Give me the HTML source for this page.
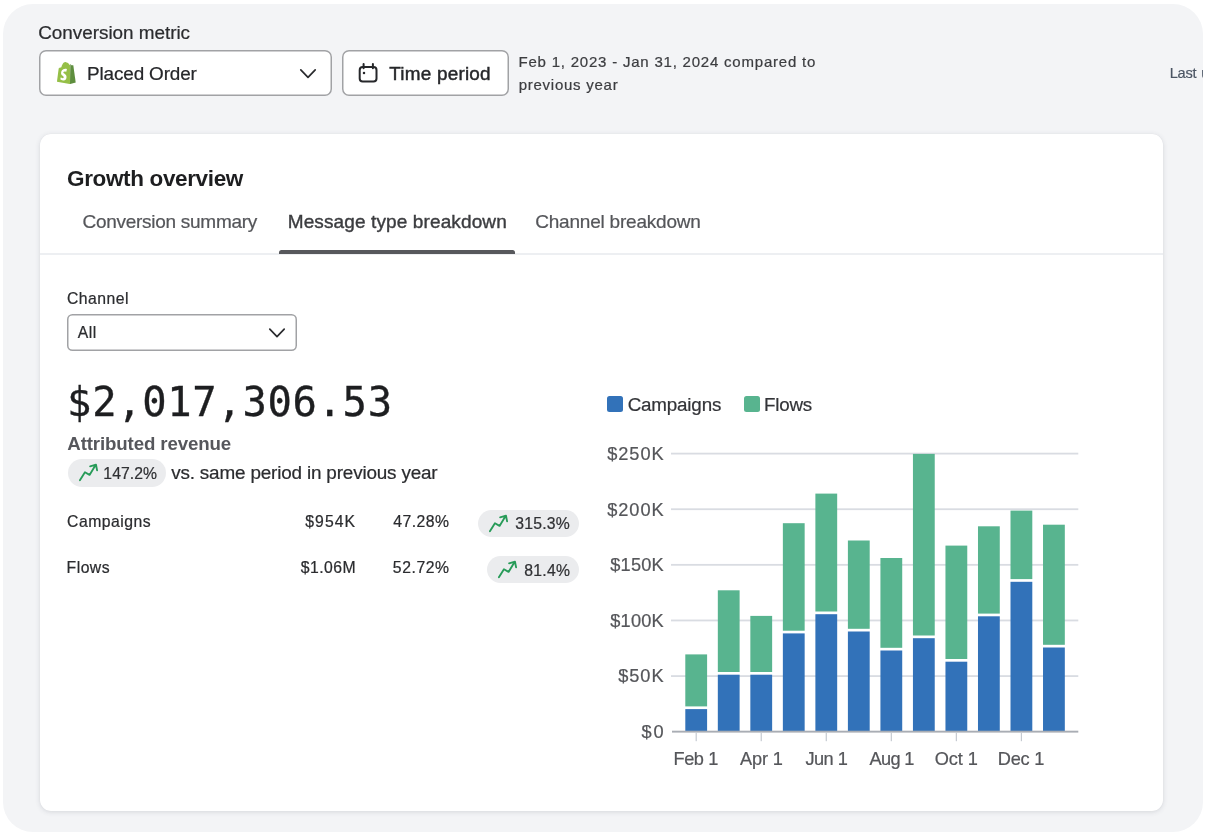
<!DOCTYPE html>
<html lang="en">
<head>
<meta charset="utf-8">
<title>Growth overview</title>
<style>
*{box-sizing:border-box;margin:0;padding:0}
html,body{width:1205px;height:836px;overflow:hidden;background:#fff}
body{position:relative;font-family:"Liberation Sans",sans-serif;color:#202124;-webkit-font-smoothing:antialiased}
.abs{position:absolute}
.t{position:absolute;white-space:nowrap;line-height:1;-webkit-text-stroke:.22px currentColor}
#panel{position:absolute;left:3px;top:4px;width:1200px;height:828px;background:#f3f4f6;border-radius:30px;overflow:hidden}
#card{position:absolute;left:39.5px;top:134px;width:1123.7px;height:676.8px;background:#fff;border-radius:11px;box-shadow:0 1px 5px rgba(60,70,85,.16),0 0 1px rgba(60,70,85,.10)}
.box{position:absolute;background:#fff;border-radius:7px;box-shadow:inset 0 0 0 1.5px #a1a2a5}
.pill{position:absolute;background:#ebecee;border-radius:14px;height:27.6px}
</style>
</head>
<body>
<div id="panel"></div>
<div id="layer" style="position:absolute;left:0;top:0;width:1205px;height:836px;will-change:transform">

<!-- header controls -->
<div class="t" id="lblConv" style="left:38.26px;top:23.80px;font-size:18.9px;letter-spacing:-0.026px;color:#2b2c2f">Conversion metric</div>

<div class="box" id="sel1" style="left:39.3px;top:50.4px;width:293px;height:45.4px"></div>
<svg class="abs" id="bag" style="left:56.8px;top:61.9px" width="18.8" height="22.1" preserveAspectRatio="none" viewBox="0 0 109.5 124.5">
  <path d="M74.7 14.8s-1.4.4-3.7 1.1c-.4-1.3-1-2.8-1.8-4.4-2.6-5-6.500-7.700-11.100-7.700-.3 0-.6 0-1 .1-.1-.2-.3-.3-.4-.5-2-2.200-4.600-3.200-7.700-3.100-6 .2-12 4.500-16.800 12.200-3.400 5.400-6 12.200-6.700 17.500-6.900 2.100-11.700 3.600-11.800 3.700-3.500 1.100-3.600 1.200-4 4.500C9.100 40.700 0 111.200 0 111.200l75.600 13.100V14.600c-.4.100-.7.100-.9.200z" fill="#95bf47"/>
  <path d="M75.600 124.300l33.900-8.400S95.400 20.600 95.300 20c-.1-.6-.6-1-1.100-1-.5 0-9.300-.2-9.300-.2s-5.400-5.200-7.400-7.200l-1.900 112.700z" fill="#5e8e3e"/>
  <path d="M58 39.900l-3.900 14.700s-4.400-2-9.600-1.700c-7.600.5-7.700 5.300-7.600 6.500.4 6.600 17.700 8 18.700 23.400.8 12.100-6.400 20.400-16.800 21.100-12.500.8-19.400-6.600-19.400-6.600l2.600-11.300s6.900 5.200 12.400 4.900c3.600-.2 4.900-3.200 4.800-5.300-.5-8.600-14.700-8.100-15.600-22.300-.8-11.900 7.100-24 24.400-25.100 6.800-.5 10 1.700 10 1.700z" fill="#fff"/>
</svg>
<div class="t" id="txtPlaced" style="left:87.04px;top:64.80px;font-size:18.9px;letter-spacing:-0.132px;color:#26272a">Placed Order</div>
<svg class="abs" id="chev1" style="left:298.40px;top:67.20px" width="20" height="14" viewBox="0 0 20 14"><path d="M2.800 2.800 L10 10.400 L17.200 2.800" fill="none" stroke="#2a2b2e" stroke-width="1.700" stroke-linecap="round" stroke-linejoin="round"/></svg>

<div class="box" id="btnTime" style="left:342px;top:50.400px;width:166.800px;height:45.400px"></div>
<svg class="abs" id="cal" style="left:356px;top:61px" width="24" height="24" viewBox="0 0 24 24" fill="none" stroke="#26272a" stroke-width="2" stroke-linecap="round">
  <rect x="3.700" y="5.900" width="16.800" height="14.600" rx="3"/>
  <path d="M7.600 2.900v4.400M16.900 2.900v4.400"/>
  <circle cx="8" cy="12" r="1.250" fill="#26272a" stroke="none"/>
</svg>
<div class="t" id="txtTime" style="left:389.29px;top:64.50px;font-size:18.9px;letter-spacing:0.225px;color:#26272a;-webkit-text-stroke:.45px #26272a">Time period</div>

<div class="t" id="txtDate1" style="left:518.54px;top:53.90px;font-size:15px;color:#3c3d40;letter-spacing:0.787px">Feb 1, 2023 - Jan 31, 2024 compared to</div>
<div class="t" id="txtDate2" style="left:518.66px;top:77.20px;font-size:15px;color:#3c3d40;letter-spacing:0.750px">previous year</div>
<div class="t" id="txtLast" style="left:1169.8px;top:65.64px;font-size:14.6px;color:#4b5563;width:33.2px;overflow:hidden;letter-spacing:-.3px;word-spacing:1.3px;-webkit-text-stroke:.2px #4b5563">Last updated</div>

<div id="card"></div>

<!-- card header -->
<div class="t" id="ttl" style="left:67.00px;top:168.27px;font-size:22.5px;font-weight:700;color:#1d1e20;letter-spacing:-0.355px;-webkit-text-stroke:0">Growth overview</div>
<div class="t" id="tab1" style="left:82.55px;top:212.41px;font-size:19px;color:#55565a;letter-spacing:-0.280px">Conversion summary</div>
<div class="t" id="tab2" style="left:287.71px;top:212.41px;font-size:19px;color:#3c3d40;letter-spacing:0.122px;-webkit-text-stroke:.4px #3c3d40">Message type breakdown</div>
<div class="t" id="tab3" style="left:535.21px;top:212.41px;font-size:19px;color:#55565a;letter-spacing:-0.205px">Channel breakdown</div>
<div class="abs" id="divider" style="left:39.5px;top:253px;width:1123.7px;height:1.8px;background:#edeff2"></div>
<div class="abs" id="tabline" style="left:278.9px;top:250px;width:236.3px;height:3.5px;background:#57585c;border-radius:2.5px 2.5px 0 0"></div>

<!-- channel select -->
<div class="t" id="lblChan" style="left:66.94px;top:291.36px;font-size:15.75px;color:#2b2c2f;letter-spacing:0.463px">Channel</div>
<div class="box" id="sel2" style="left:67.3px;top:314.3px;width:229.8px;height:36.8px;border-radius:5.5px"></div>
<div class="t" id="txtAll" style="left:77.69px;top:324.86px;font-size:15.75px;color:#2b2c2f;letter-spacing:0.524px">All</div>
<svg class="abs" id="chev2" style="left:267.400px;top:326.400px" width="20" height="14" viewBox="0 0 20 14"><path d="M2.800 3.200 L10 10.600 L17.200 3.200" fill="none" stroke="#2a2b2e" stroke-width="1.700" stroke-linecap="round" stroke-linejoin="round"/></svg>

<!-- big number -->
<div class="t" id="big" style="left:67.08px;top:381.83px;font-family:'DejaVu Sans Mono','Liberation Mono',monospace;font-size:40.5px;color:#1d1e20;letter-spacing:0.664px;-webkit-text-stroke:.35px #1d1e20">$2,017,306.53</div>
<div class="t" id="attr" style="left:67.34px;top:435.07px;font-size:18.7px;font-weight:700;color:#56575c;letter-spacing:-0.139px;-webkit-text-stroke:0">Attributed revenue</div>

<div class="pill" id="pill0" style="left:67.500px;top:459px;width:98.600px"></div>
<svg class="abs trend" id="tr0" style="left:67.50px;top:459.00px" width="40" height="28" viewBox="0 0 40 28"><path d="M11.9 21.3 L16.95 13.2 L21.55 15.9 L27.6 5.9 M22.1 7.3 L28 5.7 L29.1 11.4" fill="none" stroke="#279b58" stroke-width="1.85" stroke-linecap="round" stroke-linejoin="round"/></svg>
<div class="t" id="p0t" style="left:103.35px;top:465.56px;font-size:15.75px;color:#303134;letter-spacing:0.073px">147.2%</div>
<div class="t" id="vs" style="left:171.16px;top:464.40px;font-size:18.9px;color:#2b2c2f;letter-spacing:-0.176px">vs. same period in previous year</div>

<!-- rows -->
<div class="t" id="r1a" style="left:67.08px;top:513.76px;font-size:15.75px;color:#2b2c2f;letter-spacing:0.472px">Campaigns</div>
<div class="t" id="r1b" style="left:305.27px;top:513.76px;font-size:15.75px;color:#2b2c2f;letter-spacing:1.073px">$954K</div>
<div class="t" id="r1c" style="left:393.22px;top:513.76px;font-size:15.75px;color:#2b2c2f;letter-spacing:0.492px">47.28%</div>
<div class="pill" id="pill1" style="left:478.20px;top:509.70px;width:101.100px"></div>
<svg class="abs trend" id="tr1" style="left:478.20px;top:509.70px" width="40" height="28" viewBox="0 0 40 28"><path d="M11.9 21.3 L16.95 13.2 L21.55 15.9 L27.6 5.9 M22.1 7.3 L28 5.7 L29.1 11.4" fill="none" stroke="#279b58" stroke-width="1.85" stroke-linecap="round" stroke-linejoin="round"/></svg>
<div class="t" id="p1t" style="left:515.29px;top:515.76px;font-size:15.75px;color:#303134;letter-spacing:0.229px">315.3%</div>

<div class="t" id="r2a" style="left:66.62px;top:559.66px;font-size:15.75px;color:#2b2c2f;letter-spacing:0.452px">Flows</div>
<div class="t" id="r2b" style="left:300.84px;top:559.66px;font-size:15.75px;color:#2b2c2f;letter-spacing:0.462px">$1.06M</div>
<div class="t" id="r2c" style="left:392.84px;top:559.66px;font-size:15.75px;color:#2b2c2f;letter-spacing:0.570px">52.72%</div>
<div class="pill" id="pill2" style="left:487.20px;top:555.60px;width:92.300px"></div>
<svg class="abs trend" id="tr2" style="left:487.20px;top:555.60px" width="40" height="28" viewBox="0 0 40 28"><path d="M11.9 21.3 L16.95 13.2 L21.55 15.9 L27.6 5.9 M22.1 7.3 L28 5.7 L29.1 11.4" fill="none" stroke="#279b58" stroke-width="1.85" stroke-linecap="round" stroke-linejoin="round"/></svg>
<div class="t" id="p2t" style="left:524.29px;top:563.16px;font-size:15.75px;color:#303134;letter-spacing:0.251px">81.4%</div>

<!-- CHART -->
<svg id="chart" class="abs" style="left:0;top:0" width="1205" height="836" viewBox="0 0 1205 836" font-family="'Liberation Sans', sans-serif">
<rect x="671" y="675.18" width="407.3" height="1.8" fill="#d9dce2"/>
<rect x="671" y="619.56" width="407.3" height="1.8" fill="#d9dce2"/>
<rect x="671" y="563.94" width="407.3" height="1.8" fill="#d9dce2"/>
<rect x="671" y="508.32" width="407.3" height="1.8" fill="#d9dce2"/>
<rect x="671" y="452.70" width="407.3" height="1.8" fill="#d9dce2"/>
<rect x="607" y="396" width="16" height="16" rx="2.5" fill="#3272b9"/>
<rect x="744" y="396" width="16" height="16" rx="2.5" fill="#58b48f"/>
<rect x="685.30" y="654.40" width="21.8" height="52.00" fill="#58b48f"/>
<rect x="685.30" y="709.10" width="21.8" height="22.50" fill="#3272b9"/>
<rect x="717.82" y="590.30" width="21.8" height="81.70" fill="#58b48f"/>
<rect x="717.82" y="674.70" width="21.8" height="56.90" fill="#3272b9"/>
<rect x="750.34" y="615.90" width="21.8" height="56.10" fill="#58b48f"/>
<rect x="750.34" y="674.70" width="21.8" height="56.90" fill="#3272b9"/>
<rect x="782.86" y="523.20" width="21.8" height="107.50" fill="#58b48f"/>
<rect x="782.86" y="633.40" width="21.8" height="98.20" fill="#3272b9"/>
<rect x="815.38" y="493.60" width="21.8" height="117.90" fill="#58b48f"/>
<rect x="815.38" y="614.20" width="21.8" height="117.40" fill="#3272b9"/>
<rect x="847.90" y="540.50" width="21.8" height="88.30" fill="#58b48f"/>
<rect x="847.90" y="631.50" width="21.8" height="100.10" fill="#3272b9"/>
<rect x="880.42" y="558.00" width="21.8" height="89.80" fill="#58b48f"/>
<rect x="880.42" y="650.50" width="21.8" height="81.10" fill="#3272b9"/>
<rect x="912.94" y="453.90" width="21.8" height="181.60" fill="#58b48f"/>
<rect x="912.94" y="638.20" width="21.8" height="93.40" fill="#3272b9"/>
<rect x="945.46" y="545.60" width="21.8" height="113.40" fill="#58b48f"/>
<rect x="945.46" y="661.70" width="21.8" height="69.90" fill="#3272b9"/>
<rect x="977.98" y="526.30" width="21.8" height="87.30" fill="#58b48f"/>
<rect x="977.98" y="616.30" width="21.8" height="115.30" fill="#3272b9"/>
<rect x="1010.50" y="510.60" width="21.8" height="68.50" fill="#58b48f"/>
<rect x="1010.50" y="581.80" width="21.8" height="149.80" fill="#3272b9"/>
<rect x="1043.02" y="524.70" width="21.8" height="120.10" fill="#58b48f"/>
<rect x="1043.02" y="647.50" width="21.8" height="84.10" fill="#3272b9"/>
<rect x="672" y="730.70" width="406.3" height="1.9" fill="#a9adb4"/>
<rect x="695.60" y="732.60" width="1.2" height="8.6" fill="#c5cad1"/>
<rect x="760.64" y="732.60" width="1.2" height="8.6" fill="#c5cad1"/>
<rect x="825.68" y="732.60" width="1.2" height="8.6" fill="#c5cad1"/>
<rect x="890.72" y="732.60" width="1.2" height="8.6" fill="#c5cad1"/>
<rect x="955.76" y="732.60" width="1.2" height="8.6" fill="#c5cad1"/>
<rect x="1020.80" y="732.60" width="1.2" height="8.6" fill="#c5cad1"/>
</svg>
<!-- /CHART -->
<!-- chart labels -->
<div class="t cl" id="lg0" style="left:627.65px;top:395.58px;font-size:18.8px;color:#333438;letter-spacing:-0.164px">Campaigns</div>
<div class="t cl" id="lg1" style="left:764.06px;top:395.58px;font-size:18.8px;color:#333438;letter-spacing:-0.237px">Flows</div>
<div class="t cl" id="yl0" style="left:641.49px;top:722.59px;font-size:18.2px;color:#55565a;letter-spacing:1.995px">$0</div>
<div class="t cl" id="yl1" style="left:618.17px;top:666.99px;font-size:18.2px;color:#55565a;letter-spacing:0.992px">$50K</div>
<div class="t cl" id="yl2" style="left:610.29px;top:612.39px;font-size:18.2px;color:#55565a;letter-spacing:0.186px">$100K</div>
<div class="t cl" id="yl3" style="left:610.29px;top:555.59px;font-size:18.2px;color:#55565a;letter-spacing:0.186px">$150K</div>
<div class="t cl" id="yl4" style="left:607.17px;top:501.09px;font-size:18.2px;color:#55565a;letter-spacing:0.965px">$200K</div>
<div class="t cl" id="yl5" style="left:607.17px;top:445.49px;font-size:18.2px;color:#55565a;letter-spacing:0.965px">$250K</div>
<div class="t cl" id="xl0" style="left:673.50px;top:750.49px;font-size:18.2px;color:#55565a;letter-spacing:-0.435px">Feb 1</div>
<div class="t cl" id="xl1" style="left:740.09px;top:750.49px;font-size:18.2px;color:#55565a;letter-spacing:-0.190px">Apr 1</div>
<div class="t cl" id="xl2" style="left:805.51px;top:750.49px;font-size:18.2px;color:#55565a;letter-spacing:-0.558px">Jun 1</div>
<div class="t cl" id="xl3" style="left:869.46px;top:750.49px;font-size:18.2px;color:#55565a;letter-spacing:-0.630px">Aug 1</div>
<div class="t cl" id="xl4" style="left:934.72px;top:750.49px;font-size:18.2px;color:#55565a;letter-spacing:-0.052px">Oct 1</div>
<div class="t cl" id="xl5" style="left:997.86px;top:750.49px;font-size:18.2px;color:#55565a;letter-spacing:-0.275px">Dec 1</div>

</div>
</body>
</html>
